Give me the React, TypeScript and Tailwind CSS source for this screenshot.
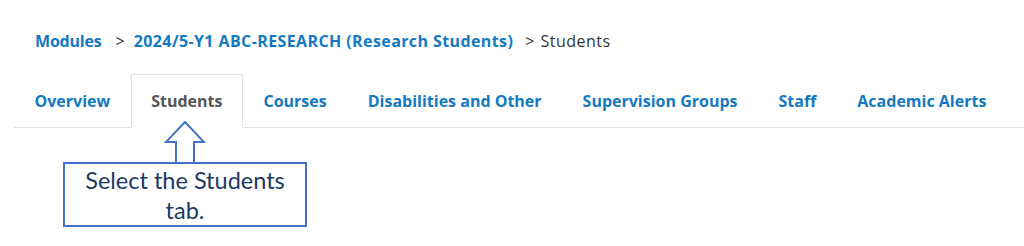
const tabs = [
  "Overview",
  "Students",
  "Courses",
  "Disabilities and Other",
  "Supervision Groups",
  "Staff",
  "Academic Alerts",
];

export default function App() {
  return (
    <div className="h-[246px] w-[1024px] overflow-hidden bg-white font-['Open_Sans',sans-serif]">
      <nav className="flex items-center pl-[35px] pt-[29px] text-[16px] leading-[24px]">
        <a className="font-bold tracking-[-0.2px] text-[#1479c1]">Modules</a>
        <span className="ml-[14px] mr-[9px] text-[#333]">&gt;</span>
        <a className="font-bold tracking-[0.4px] text-[#1479c1]">2024/5-Y1 ABC-RESEARCH (Research Students)</a>
        <span className="ml-[12px] mr-[6px] text-[#333]">&gt;</span>
        <span className="tracking-[0.5px] text-[#333]">Students</span>
      </nav>

      <ul className="ml-[14px] mt-[21px] flex border-b border-[#dde2e6]">
        {tabs.map((tab) => {
          const active = tab === "Students";
          return (
            <li
              key={tab}
              className={`-mb-px flex h-[54px] items-center px-[19.5px] text-[16px] font-bold ${
                active
                  ? "border border-[#dde2e6] border-b-white bg-white text-[#555]"
                  : "border border-transparent text-[#1479c1]"
              }`}
            >
              {tab}
            </li>
          );
        })}
      </ul>

      {/* callout pointing at the Students tab */}
      <div className="-mt-[7px] ml-[63px] flex w-[244px] flex-col items-center">
        <svg width="42" height="43" viewBox="0 0 42 43" className="-mb-[2px]">
          <path
            d="M21 1 L40 21 L30 21 L30 42 L12 42 L12 21 L2 21 Z"
            fill="white"
            stroke="#4472c4"
            strokeWidth="2"
            strokeLinejoin="miter"
          />
        </svg>
        <div className="flex h-[65px] w-[244px] flex-col items-center justify-center border-2 border-[#4472c4] bg-white text-center font-['Lato',sans-serif] text-[23.5px] leading-[30px] text-[#203864]">
          <span>Select the Students</span>
          <span>tab.</span>
        </div>
      </div>
    </div>
  );
}
